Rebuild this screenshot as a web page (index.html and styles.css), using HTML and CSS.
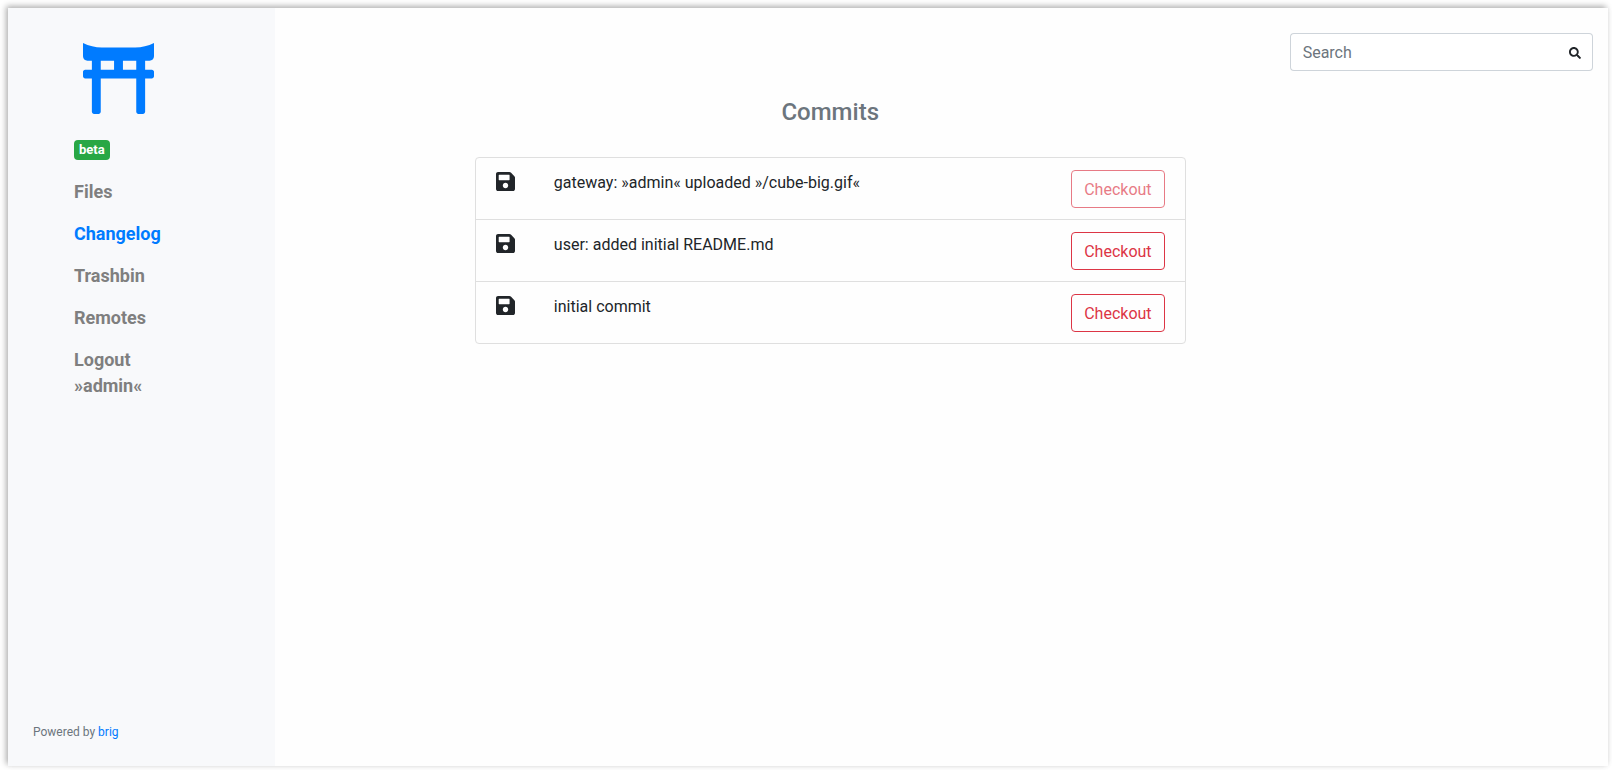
FILE: index.html
```html
<!DOCTYPE html>
<html lang="en">
<head>
<meta charset="utf-8">
<meta name="viewport" content="width=device-width, initial-scale=1">
<title>brig – Changelog</title>
<link rel="stylesheet" href="styles.css">
</head>
<body>
<div class="app">
  <aside class="sidebar">
    <div class="brand">
      <svg class="logo" viewBox="0 0 512 512" aria-hidden="true"><path d="M376.45 32h-240.9A303.17 303.17 0 0 1 0 0v96c0 17.67 14.33 32 32 32h32v64H16c-8.84 0-16 7.16-16 16v32c0 8.84 7.16 16 16 16h48v240c0 8.84 7.16 16 16 16h32c8.84 0 16-7.16 16-16V256h256v240c0 8.84 7.16 16 16 16h32c8.84 0 16-7.16 16-16V256h48c8.84 0 16-7.16 16-16v-32c0-8.84-7.16-16-16-16h-48v-64h32c17.67 0 32-14.33 32-32V0a303.17 303.17 0 0 1-135.55 32zM128 128h96v64h-96v-64zm256 64h-96v-64h96v64z"/></svg>
      <span class="badge">beta</span>
    </div>
    <nav class="nav">
      <a class="nav-link" href="#files">Files</a>
      <a class="nav-link active" href="#changelog" aria-current="page">Changelog</a>
      <a class="nav-link" href="#trashbin">Trashbin</a>
      <a class="nav-link" href="#remotes">Remotes</a>
      <a class="nav-link" href="#logout">Logout<br>»admin«</a>
    </nav>
    <footer class="footer">Powered by <a class="footer-link" href="#brig">brig</a></footer>
  </aside>
  <main class="main">
    <form class="search" role="search">
      <input class="search-input" type="text" placeholder="Search" aria-label="Search">
      <button class="search-button" type="button" aria-label="Submit search">
        <svg class="search-icon" viewBox="0 0 512 512" aria-hidden="true"><path d="M505 442.7L405.3 343c-4.5-4.5-10.6-7-17-7H372c27.6-35.3 44-79.7 44-128C416 93.1 322.9 0 208 0S0 93.1 0 208s93.1 208 208 208c48.3 0 92.7-16.4 128-44v16.3c0 6.4 2.5 12.5 7 17l99.7 99.7c9.4 9.4 24.6 9.4 33.9 0l28.3-28.3c9.4-9.4 9.4-24.6.1-34zM208 336c-70.7 0-128-57.2-128-128 0-70.7 57.2-128 128-128 70.7 0 128 57.2 128 128 0 70.7-57.2 128-128 128z"/></svg>
      </button>
    </form>
    <section class="content">
      <h1 class="title">Commits</h1>
      <ul class="commits">
        <li class="commit">
          <svg class="save-icon" viewBox="0 32 448 448" aria-hidden="true"><path d="M433.941 129.941l-83.882-83.882A48 48 0 0 0 316.118 32H48C21.49 32 0 53.49 0 80v352c0 26.51 21.49 48 48 48h352c26.51 0 48-21.49 48-48V163.882a48 48 0 0 0-14.059-33.941zM224 416c-35.346 0-64-28.654-64-64 0-35.346 28.654-64 64-64s64 28.654 64 64c0 35.346-28.654 64-64 64zm96-304.52V212c0 6.627-5.373 12-12 12H76c-6.627 0-12-5.373-12-12V108c0-6.627 5.373-12 12-12h228.52c3.183 0 6.235 1.264 8.485 3.515l3.48 3.48A11.996 11.996 0 0 1 320 111.48z"/></svg>
          <span class="message">gateway: »admin« uploaded »/cube-big.gif«</span>
          <button class="checkout" type="button" disabled>Checkout</button>
        </li>
        <li class="commit">
          <svg class="save-icon" viewBox="0 32 448 448" aria-hidden="true"><path d="M433.941 129.941l-83.882-83.882A48 48 0 0 0 316.118 32H48C21.49 32 0 53.49 0 80v352c0 26.51 21.49 48 48 48h352c26.51 0 48-21.49 48-48V163.882a48 48 0 0 0-14.059-33.941zM224 416c-35.346 0-64-28.654-64-64 0-35.346 28.654-64 64-64s64 28.654 64 64c0 35.346-28.654 64-64 64zm96-304.52V212c0 6.627-5.373 12-12 12H76c-6.627 0-12-5.373-12-12V108c0-6.627 5.373-12 12-12h228.52c3.183 0 6.235 1.264 8.485 3.515l3.48 3.48A11.996 11.996 0 0 1 320 111.48z"/></svg>
          <span class="message">user: added initial README.md</span>
          <button class="checkout" type="button">Checkout</button>
        </li>
        <li class="commit">
          <svg class="save-icon" viewBox="0 32 448 448" aria-hidden="true"><path d="M433.941 129.941l-83.882-83.882A48 48 0 0 0 316.118 32H48C21.49 32 0 53.49 0 80v352c0 26.51 21.49 48 48 48h352c26.51 0 48-21.49 48-48V163.882a48 48 0 0 0-14.059-33.941zM224 416c-35.346 0-64-28.654-64-64 0-35.346 28.654-64 64-64s64 28.654 64 64c0 35.346-28.654 64-64 64zm96-304.52V212c0 6.627-5.373 12-12 12H76c-6.627 0-12-5.373-12-12V108c0-6.627 5.373-12 12-12h228.52c3.183 0 6.235 1.264 8.485 3.515l3.48 3.48A11.996 11.996 0 0 1 320 111.48z"/></svg>
          <span class="message">initial commit</span>
          <button class="checkout" type="button">Checkout</button>
        </li>
      </ul>
    </section>
  </main>
</div>
</body>
</html>
```
FILE: styles.css
```css
* {
  box-sizing: border-box;
}

body {
  margin: 0;
  padding: 8px 4px 4px 8px;
  min-height: 100vh;
  display: flex;
  background: #fff;
  color: #212529;
  font-family: Roboto, "Liberation Sans", sans-serif;
  font-size: 16px;
  line-height: 24px;
}

.app {
  flex: 1;
  display: grid;
  grid-template-columns: 1fr 5fr;
  background: #fefefe;
  box-shadow: -2px -2px 6px rgba(0, 0, 0, 0.3), 0 0 6px rgba(0, 0, 0, 0.04);
}

.sidebar {
  display: flex;
  flex-direction: column;
  padding: 35px 25px 22px;
  background: #f8f9fb;
}

.brand {
  display: flex;
  flex-direction: column;
  align-items: flex-start;
  gap: 26px;
  padding-left: 41px;
}

.logo {
  width: 71px;
  height: 71px;
  margin-left: 9px;
  fill: #007bff;
}

.badge {
  padding: 4px 5px;
  border-radius: 4px;
  background: #28a745;
  color: #fff;
  font-size: 13px;
  font-weight: 700;
  line-height: 12px;
}

.nav {
  display: flex;
  flex-direction: column;
  padding: 11px 0 0 41px;
}

.nav-link {
  padding: 8px 0;
  color: #7f7f7f;
  font-size: 18px;
  font-weight: 700;
  line-height: 26px;
  text-decoration: none;
}

.nav-link.active {
  color: #007bff;
}

.footer {
  margin-top: auto;
  color: #6c757d;
  font-size: 12px;
}

.footer-link {
  color: #007bff;
  text-decoration: none;
}

.main {
  padding-top: 25px;
}

.search {
  display: flex;
  width: 25%;
  height: 38px;
  margin-left: auto;
  padding: 0 15px;
}

.search-input {
  flex: 1;
  min-width: 0;
  padding: 7px 12px 5px;
  border: 1px solid #ced4da;
  border-right: 0;
  border-radius: 4px 0 0 4px;
  background: #fff;
  color: #495057;
  font: inherit;
}

.search-input::placeholder {
  color: #6c757d;
  opacity: 1;
}

.search-button {
  display: flex;
  align-items: center;
  padding: 2px 11px 0;
  border: 1px solid #ced4da;
  border-left: 0;
  border-radius: 0 4px 4px 0;
  background: #fff;
}

.search-icon {
  width: 12px;
  height: 12px;
  fill: #212529;
}

.content {
  width: calc(100% * 5 / 6);
  padding-top: 26px;
}

.title {
  margin: 0 0 30px;
  color: #6c757d;
  font-size: 24px;
  font-weight: 500;
  line-height: 30px;
  text-align: center;
}

.commits {
  width: calc(100% * 2 / 3 - 30px);
  margin: 0 auto;
  padding: 0;
  list-style: none;
  border: 1px solid #dfdfdf;
  border-radius: 4px;
}

.commit {
  display: flex;
  align-items: flex-start;
  padding: 12px 20px 11px;
}

.commit + .commit {
  border-top: 1px solid #dfdfdf;
}

.save-icon {
  flex: none;
  width: 19px;
  height: 19px;
  margin: 2px 39px 0 0;
  fill: #212529;
}

.message {
  flex: 1;
  padding-top: 1px;
}

.checkout {
  padding: 7px 12px 5px;
  border: 1px solid #dc3545;
  border-radius: 4px;
  background: transparent;
  color: #dc3545;
  font: inherit;
}

.checkout:disabled {
  opacity: 0.65;
}
```
